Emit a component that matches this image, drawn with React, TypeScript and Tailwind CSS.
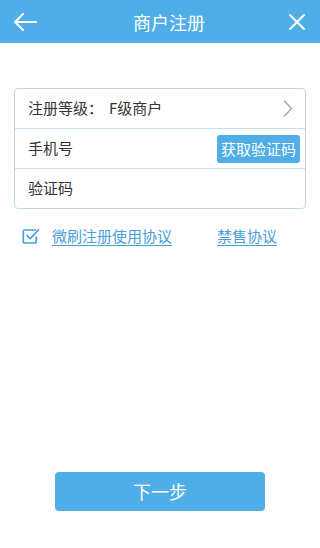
const font = { fontFamily: '"Noto Sans CJK SC", "Liberation Sans", sans-serif' };

export default function App() {
  return (
    <div className="w-[320px] h-[548px] bg-white flex flex-col" style={font}>
      {/* Header */}
      <div className="h-[43px] bg-[#4faee7] flex items-center pl-[12px] pr-[13px] text-white">
        <svg width="26" height="20" viewBox="0 0 26 20" fill="none" stroke="white" strokeWidth="2" strokeLinecap="round" strokeLinejoin="round">
          <path d="M24 10H3" />
          <path d="M11 2L3 10l8 8" />
        </svg>
        <span className="ml-[95px] text-[18px] leading-none">商户注册</span>
        <svg className="ml-auto" width="20" height="20" viewBox="0 0 20 20" fill="none" stroke="white" strokeWidth="2" strokeLinecap="round">
          <path d="M3 3l14 14M17 3L3 17" />
        </svg>
      </div>

      {/* Form */}
      <div className="mt-[45px] mx-[14px] border border-[#b9d8ea] rounded-[4px] text-[#333] text-[15px]">
        <div className="h-[40px] flex items-center justify-between pl-[13px] pr-[12px] border-b border-[#c9dfea]">
          <span>
            注册等级：<span className="ml-[6px]">F级商户</span>
          </span>
          <svg width="10" height="17" viewBox="0 0 10 17" fill="none" stroke="#a5a5a5" strokeWidth="1.4" strokeLinecap="round" strokeLinejoin="round">
            <path d="M1.5 1L8.5 8.5L1.5 16" />
          </svg>
        </div>
        <div className="h-[40px] flex items-center justify-between pl-[13px] pr-[5px] border-b border-[#c9dfea]">
          <span>手机号</span>
          <button className="h-[28px] px-[4px] bg-[#4faee7] text-white text-[15px] rounded-[3px] leading-none">获取验证码</button>
        </div>
        <div className="h-[39px] flex items-center pl-[13px]">
          <span>验证码</span>
        </div>
      </div>

      {/* Agreements */}
      <div className="mt-[16px] flex items-center text-[15px] text-[#4a9fd5]">
        <svg className="ml-[22px]" width="18" height="16" viewBox="0 0 18 16" fill="none" stroke="#4a9fd5" strokeWidth="1.7" strokeLinejoin="round" strokeLinecap="round">
          <path d="M13.5 2H2.5a1.2 1.2 0 0 0-1.2 1.2v10.6a1.2 1.2 0 0 0 1.2 1.2h10.6a1.2 1.2 0 0 0 1.2-1.2V9" />
          <path d="M5 7.5l3.2 3.2L16.5 2" />
        </svg>
        <span className="ml-[12px] underline underline-offset-[3px]">微刷注册使用协议</span>
        <span className="ml-[45px] underline underline-offset-[3px]">禁售协议</span>
      </div>

      <div className="flex-1" />

      {/* Next button */}
      <div className="mb-[37px] flex justify-center">
        <button className="w-[210px] h-[39px] bg-[#4faee7] rounded-[4px] text-white text-[18px]">下一步</button>
      </div>
    </div>
  );
}
